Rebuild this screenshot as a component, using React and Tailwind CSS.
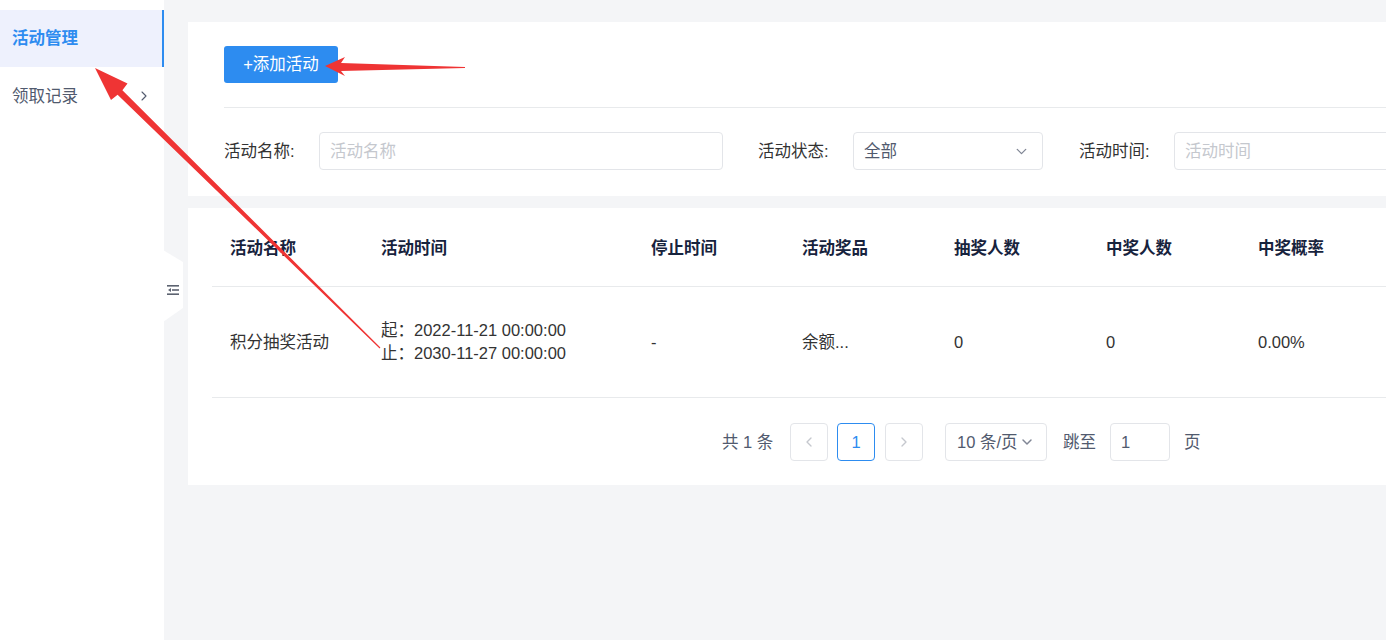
import React from 'react';
import { ChevronRight, ChevronDown, ChevronLeft } from 'lucide-react';

const columns = ['活动名称', '活动时间', '停止时间', '活动奖品', '抽奖人数', '中奖人数', '中奖概率', ''];
const gridCols = 'grid grid-cols-[151px_270px_151px_152px_152px_152px_152px_1fr]';

function CollapseHandle() {
  return (
    <div className="absolute left-[163px] top-[250px] w-[21px] h-[72px]">
      <svg width="21" height="72" viewBox="0 0 21 72" className="absolute inset-0">
        <polygon points="0,0 20,12 20,58 0,72" fill="#ffffff" />
      </svg>
      <svg width="14" height="12" viewBox="0 0 14 12" className="absolute left-[3px] top-[34px]">
        <rect x="1" y="1" width="12" height="1.6" fill="#5c6270" />
        <rect x="6" y="5.2" width="7" height="1.6" fill="#5c6270" />
        <polygon points="2,6 5,4 5,8" fill="#5c6270" />
        <rect x="1" y="9.4" width="12" height="1.6" fill="#5c6270" />
      </svg>
    </div>
  );
}

function Arrows() {
  return (
    <svg width="1386" height="640" viewBox="0 0 1386 640" className="absolute inset-0 pointer-events-none">
      <polygon points="325,66 345,57 341,63 465,67 465,68 341,71 345,76" fill="#ef3434" />
      <polygon points="95,68 127.5,83.5 122.4,90.2 380.4,347.6 379.6,348.4 117.6,94.8 111,100" fill="#ef3434" />
    </svg>
  );
}

function Input({ placeholder, className }) {
  return (
    <div className={`shrink-0 h-[38px] border border-[#e3e5e9] rounded-[4px] flex items-center pl-[10px] text-[#c5c8ce] bg-white ${className}`}>
      {placeholder}
    </div>
  );
}

export default function App() {
  return (
    <div
      className="relative w-[1386px] h-[640px] overflow-hidden flex bg-[#f4f5f7] text-[#333] text-[16.5px]"
      style={{ fontFamily: '"Liberation Sans", "Noto Sans CJK SC", sans-serif' }}
    >
      <aside className="w-[164px] shrink-0 bg-white pt-[10px]">
        <div className="h-[57px] bg-[#eef1fd] border-r-2 border-[#2d8cf0] pl-3 flex items-center text-[#2d8cf0] font-bold">
          活动管理
        </div>
        <div className="h-[58px] flex items-center justify-between pl-3 pr-[12px] text-[#515a6e]">
          <span>领取记录</span>
          <ChevronRight size={16} strokeWidth={1.6} />
        </div>
      </aside>

      <main className="flex-1 min-w-0 pl-6 pt-[22px]">
        <div className="w-[1400px] bg-white pl-9 pt-6 pb-[26px]">
          <button className="w-[114px] h-[37px] rounded-[3px] bg-[#2d8cf0] text-white flex items-center justify-center">
            +添加活动
          </button>
          <div className="mt-6 border-t border-[#e8eaec]" />
          <div className="mt-6 flex items-center">
            <span className="shrink-0 w-[95px]">活动名称:</span>
            <Input placeholder="活动名称" className="w-[404px]" />
            <span className="shrink-0 ml-[35px] w-[95px]">活动状态:</span>
            <div className="shrink-0 w-[190px] h-[38px] border border-[#e3e5e9] rounded-[4px] flex items-center justify-between pl-[10px] pr-[12px] text-[#515a6e]">
              <span>全部</span>
              <ChevronDown size={17} strokeWidth={1.8} className="text-[#808695]" />
            </div>
            <span className="shrink-0 ml-[36px] w-[95px]">活动时间:</span>
            <Input placeholder="活动时间" className="w-[404px]" />
          </div>
        </div>

        <div className="w-[1400px] bg-white mt-3 pl-6 pb-[24px]">
          <div className={`${gridCols} h-[79px] items-center border-b border-[#e8eaec] font-bold text-[#17233d]`}>
            {columns.map((c, i) => (
              <div key={i} className="pl-[18px] pt-[2px]">{c}</div>
            ))}
          </div>
          <div className={`${gridCols} h-[111px] items-center border-b border-[#e8eaec] text-[#333]`}>
            <div className="pl-[18px]">积分抽奖活动</div>
            <div className="pl-[18px] leading-[23px]">
              <div>起：2022-11-21 00:00:00</div>
              <div>止：2030-11-27 00:00:00</div>
            </div>
            <div className="pl-[18px]">-</div>
            <div className="pl-[18px]">余额...</div>
            <div className="pl-[18px]">0</div>
            <div className="pl-[18px]">0</div>
            <div className="pl-[18px]">0.00%</div>
            <div />
          </div>

          <div className="mt-[25px] pl-[510px] flex items-center text-[#515a6e]">
            <span className="w-[52px] shrink-0">共 1 条</span>
            <div className="ml-4 w-[38px] h-[38px] border border-[#e3e5e9] rounded-[4px] flex items-center justify-center text-[#c5c8ce]">
              <ChevronLeft size={16} />
            </div>
            <div className="ml-[9px] w-[38px] h-[38px] border border-[#2d8cf0] rounded-[4px] flex items-center justify-center text-[#2d8cf0]">
              1
            </div>
            <div className="ml-[10px] w-[38px] h-[38px] border border-[#e3e5e9] rounded-[4px] flex items-center justify-center text-[#c5c8ce]">
              <ChevronRight size={16} />
            </div>
            <div className="ml-[22px] w-[102px] h-[38px] border border-[#e3e5e9] rounded-[4px] flex items-center pl-[11px] gap-[1px]">
              <span>10 条/页</span>
              <ChevronDown size={16} strokeWidth={2.2} className="text-[#808695]" />
            </div>
            <span className="ml-4 w-[33px] shrink-0">跳至</span>
            <div className="ml-[14px] w-[60px] h-[38px] border border-[#e3e5e9] rounded-[4px] flex items-center pl-[10px]">
              1
            </div>
            <span className="ml-[14px]">页</span>
          </div>
        </div>
      </main>

      <CollapseHandle />
      <Arrows />
    </div>
  );
}
